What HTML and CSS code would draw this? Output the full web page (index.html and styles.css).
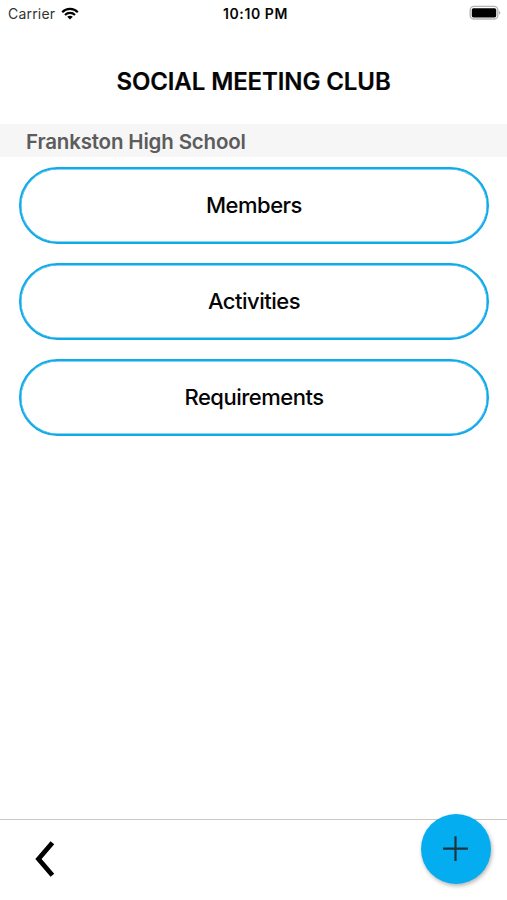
FILE: index.html
```html
<!DOCTYPE html>
<html lang="en">
<head>
<meta charset="utf-8">
<title>Social Meeting Club</title>
<link rel="stylesheet" href="styles.css">
</head>
<body>
<div class="screen">
  <header class="status">
    <div class="network">
      <span class="carrier">Carrier</span>
      <svg class="wifi" width="18" height="13" viewBox="0 0 18 13" fill="none" stroke="#000" stroke-width="2.1">
        <path d="M1.2 5.2C5.4 .8 12.6 .8 16.8 5.2"/>
        <path d="M4 8C6.8 5.2 11.2 5.2 14 8"/>
        <path d="M6.2 9.8C7.8 8.3 10.2 8.3 11.8 9.8L9 12.6Z" fill="#000" stroke="none"/>
      </svg>
    </div>
    <span class="time">10:10 PM</span>
    <svg class="battery" width="32" height="16" viewBox="0 0 32 16">
      <rect x="1.2" y="1.4" width="27.6" height="12.6" rx="3.6" fill="#fff" stroke="#b5b5b5" stroke-width="1.4"/>
      <rect x="2.8" y="3.2" width="24.4" height="9.2" rx="1.6" fill="#000"/>
      <path d="M30.2 5.6Q32 7.7 30.2 9.8Z" fill="#888"/>
    </svg>
  </header>
  <h1 class="title">SOCIAL MEETING CLUB</h1>
  <h2 class="school">Frankston High School</h2>
  <main class="menu">
    <button class="option">Members</button>
    <button class="option">Activities</button>
    <button class="option">Requirements</button>
  </main>
  <footer class="toolbar">
    <button class="back" aria-label="Back">
      <svg width="20" height="36" viewBox="0 0 20 36" fill="none" stroke="#000" stroke-width="4.8"><path d="M17.4 1.8L3.5 18L17.4 34.2"/></svg>
    </button>
    <button class="add" aria-label="Add">
      <svg width="26" height="26" viewBox="0 0 26 26" stroke="#20343c" stroke-width="2.2"><path d="M12.5 .3V25.1M.1 12.7H24.9"/></svg>
    </button>
  </footer>
</div>
</body>
</html>
```
FILE: styles.css
```css
* { box-sizing: border-box; }
body { margin: 0; background: #fff; color: #050505; font-family: Inter, "Liberation Sans", sans-serif; }
button { border: 0; padding: 0; background: none; font: inherit; color: inherit; }
svg { display: block; flex: none; }
.screen { width: 507px; height: 900px; display: flex; flex-direction: column; overflow: hidden; }
.status { height: 28px; display: grid; grid-template-columns: 1fr auto 1fr; align-items: center; padding: 0 6px 0 8px; }
.network { display: flex; align-items: center; gap: 6px; }
.carrier { font-size: 14px; letter-spacing: .2px; color: #333; margin-top: -2px; }
.wifi { margin-top: -2px; }
.time { font-size: 14px; font-weight: 600; letter-spacing: .6px; margin: -2px 0 0 2px; }
.battery { justify-self: end; margin-top: -2px; }
.title { margin: 0; height: 96px; padding-top: 10px; display: flex; align-items: center; justify-content: center; font-size: 24px; font-weight: 600; letter-spacing: -.1px; -webkit-text-stroke: .2px; white-space: nowrap; }
.school { margin: 0; height: 33px; padding: 2px 0 0 26px; display: flex; align-items: center; background: #f6f6f6; color: #5c5c5c; font-size: 20.5px; font-weight: 600; letter-spacing: -.17px; white-space: nowrap; }
.menu { flex: 1; display: flex; flex-direction: column; gap: 19px; padding: 10px 18px 0 19px; }
.option { height: 77px; border: 2px solid #11a9e8; border-radius: 39px; box-shadow: inset 0 0 0 .5px #11a9e8; display: flex; align-items: center; justify-content: center; padding-bottom: 2px; font-size: 22px; font-weight: 500; letter-spacing: -.5px; }
.toolbar { height: 81px; border-top: 1px solid #c8c8c8; display: flex; justify-content: space-between; padding: 0 16px 0 35px; }
.back { height: 36px; margin-top: 21px; }
.add { width: 70px; height: 70px; margin-top: -6px; border-radius: 50%; background: #03adef; display: flex; align-items: center; justify-content: center; box-shadow: 1px 2px 4px rgba(0,0,0,.3); }
```
